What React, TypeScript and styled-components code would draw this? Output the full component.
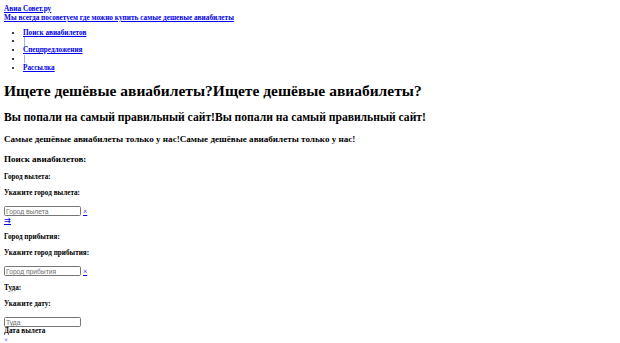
import styled, { createGlobalStyle } from "styled-components";

const GlobalStyle = createGlobalStyle`
  html, body {
    background: #ffffff;
  }
  body {
    margin: 4px;
    font-family: "Liberation Serif", "Times New Roman", serif;
    font-size: 7.3px;
    line-height: 9px;
    color: #000000;
  }
`;

const Header = styled.header`
  display: block;
`;

const HeaderLink = styled.a`
  display: block;
  color: #0000ee;
  font-weight: bold;
  font-size: 7.3px;
  line-height: 9px;
  text-decoration: underline;
`;

const Nav = styled.ul`
  margin: 6.5px 0 10px;
  padding-left: 19px;
  list-style: disc;
  font-size: 7.2px;
  line-height: 8.75px;
`;

const NavItem = styled.li`
  height: 8.75px;
`;

const NavLink = styled.a`
  color: #0000ee;
  font-weight: bold;
  text-decoration: underline;
`;

const Separator = styled.span`
  display: inline-block;
  width: 1.5px;
  height: 8.5px;
  margin-left: 0.5px;
  vertical-align: top;
  background: #a8aef0;
`;

const Title = styled.h1`
  font-size: 15.5px;
  line-height: 18px;
  margin: 10px 0;
  font-weight: bold;
`;

const Subtitle = styled.h2`
  font-size: 11.6px;
  line-height: 13px;
  margin: 10.5px 0 10px;
`;

const Tagline = styled.h3`
  font-size: 9.1px;
  line-height: 11px;
  margin: 10px 0 9px;
`;

const SearchTitle = styled.h4`
  font-size: 9px;
  line-height: 11px;
  margin: 9px 0 8px;
`;

const FieldLabel = styled.h5`
  font-size: 7.2px;
  line-height: 9px;
  margin: 7.5px 0;
`;

const Row = styled.div`
  display: flex;
  align-items: center;
  gap: 2px;
  height: 10.5px;
`;

const TextInput = styled.input`
  box-sizing: border-box;
  width: 77px;
  height: 10px;
  padding: 0 1px;
  border: 1px solid #767676;
  border-radius: 1.5px;
  font-family: "Liberation Sans", Arial, sans-serif;
  font-size: 6.7px;
  color: #000000;
  background: #ffffff;
  &::placeholder {
    color: #6f6f6f;
  }
`;

const ClearLink = styled.a<{ $small?: boolean }>`
  display: ${({ $small }) => ($small ? "block" : "inline")};
  color: #0000ee;
  font-size: ${({ $small }) => ($small ? "7px" : "7.5px")};
  line-height: 9px;
  text-decoration: underline;
`;

const SwapLink = styled.a`
  display: block;
  color: #0000ee;
  font-size: 7.5px;
  line-height: 9px;
  text-decoration: underline;
`;

const Caption = styled.div`
  font-weight: bold;
  font-size: 7.2px;
  line-height: 9px;
`;

type Field = {
  title: string;
  hint: string;
  placeholder: string;
};

const fields: Field[] = [
  { title: "Город вылета:", hint: "Укажите город вылета:", placeholder: "Город вылета" },
  { title: "Город прибытия:", hint: "Укажите город прибытия:", placeholder: "Город прибытия" },
];

export default function App() {
  return (
    <>
      <GlobalStyle />
      <Header>
        <HeaderLink href="#">Авиа Совет.ру</HeaderLink>
        <HeaderLink href="#">Мы всегда посоветуем где можно купить самые дешевые авиабилеты</HeaderLink>
      </Header>
      <Nav>
        <NavItem><NavLink href="#">Поиск авиабилетов</NavLink></NavItem>
        <NavItem><Separator /></NavItem>
        <NavItem><NavLink href="#">Спецпредложения</NavLink></NavItem>
        <NavItem><Separator /></NavItem>
        <NavItem><NavLink href="#">Рассылка</NavLink></NavItem>
      </Nav>
      <Title>Ищете дешёвые авиабилеты?Ищете дешёвые авиабилеты?</Title>
      <Subtitle>Вы попали на самый правильный сайт!Вы попали на самый правильный сайт!</Subtitle>
      <Tagline>Самые дешёвые авиабилеты только у нас!Самые дешёвые авиабилеты только у нас!</Tagline>
      <SearchTitle>Поиск авиабилетов:</SearchTitle>

      {fields.map((f, i) => (
        <div key={f.title}>
          <FieldLabel>{f.title}</FieldLabel>
          <FieldLabel>{f.hint}</FieldLabel>
          <Row>
            <TextInput placeholder={f.placeholder} />
            <ClearLink href="#">×</ClearLink>
          </Row>
          {i === 0 && <SwapLink href="#">⇉</SwapLink>}
        </div>
      ))}

      <FieldLabel>Туда:</FieldLabel>
      <FieldLabel>Укажите дату:</FieldLabel>
      <Row>
        <TextInput placeholder="Туда" />
      </Row>
      <Caption>Дата вылета</Caption>
      <ClearLink $small href="#">×</ClearLink>
    </>
  );
}
